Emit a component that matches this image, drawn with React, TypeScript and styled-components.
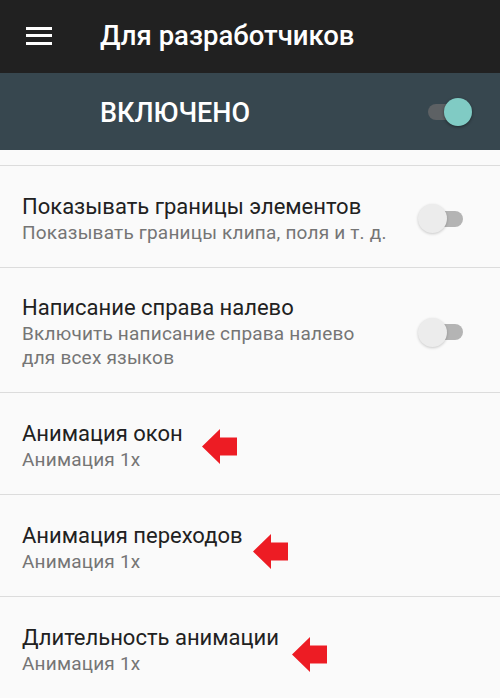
import styled, { createGlobalStyle } from "styled-components";

const GlobalStyle = createGlobalStyle`
    html, body {
        margin: 0;
        padding: 0;
        background: #fafafa;
        font-family: Roboto, "Noto Sans", "Liberation Sans", sans-serif;
    }
`;

type Item = {
    title: string;
    subtitle: string[];
    toggle?: boolean;
    arrow?: { left: number; top: number };
};

const items: Item[] = [
    { title: "Показывать границы элементов", subtitle: ["Показывать границы клипа, поля и т. д."], toggle: true },
    { title: "Написание справа налево", subtitle: ["Включить написание справа налево", "для всех языков"], toggle: true },
    { title: "Анимация окон", subtitle: ["Анимация 1x"], arrow: { left: 202, top: 36 } },
    { title: "Анимация переходов", subtitle: ["Анимация 1x"], arrow: { left: 253, top: 39 } },
    { title: "Длительность анимации", subtitle: ["Анимация 1x"], arrow: { left: 292, top: 40 } },
];

const App = () => {
    return (
        <Screen>
            <GlobalStyle />
            <AppBar>
                <MenuIcon>
                    <span />
                    <span />
                    <span />
                </MenuIcon>
                <Title>Для разработчиков</Title>
            </AppBar>

            <MasterBar>
                <MasterLabel>ВКЛЮЧЕНО</MasterLabel>
                <Switch $on />
            </MasterBar>

            <TopGap />

            <List>
                {items.map((item) => (
                    <Row key={item.title}>
                        <RowText>
                            <RowTitle>{item.title}</RowTitle>
                            {item.subtitle.map((line) => (
                                <RowSub key={line}>{line}</RowSub>
                            ))}
                        </RowText>
                        {item.toggle && <Switch />}
                        {item.arrow && (
                            <Arrow style={{ left: item.arrow.left, top: item.arrow.top }} viewBox="0 0 35 35">
                                <polygon points="0,17.5 18,0 18,8.5 35,8.5 35,26.5 18,26.5 18,35" />
                            </Arrow>
                        )}
                    </Row>
                ))}
            </List>
        </Screen>
    );
};

export default App;


const Screen = styled.div`
    width: 500px;
    height: 698px;
    overflow: hidden;
    background: #fafafa;
`;

const AppBar = styled.header`
    height: 73px;
    background: #212121;
    display: flex;
    align-items: center;
    padding-left: 26px;
    box-sizing: border-box;
`;

const MenuIcon = styled.div`
    width: 26px;
    height: 18px;
    display: flex;
    flex-direction: column;
    justify-content: space-between;
    margin-top: -2px;

    span {
        display: block;
        height: 3px;
        background: #ffffff;
    }
`;

const Title = styled.h1`
    margin: -2px 0 0 48px;
    color: #ffffff;
    font-size: 27.5px;
    font-weight: 500;
`;

const MasterBar = styled.div`
    height: 77px;
    background: #37474f;
    display: flex;
    align-items: center;
    justify-content: space-between;
    padding: 0 27px 0 100px;
    box-sizing: border-box;
`;

const MasterLabel = styled.span`
    color: #ffffff;
    font-size: 27px;
    font-weight: 500;
    margin-top: 2px;
`;

const Switch = styled.div<{ $on?: boolean }>`
    position: relative;
    flex: none;
    width: 32px;
    height: 16px;
    border-radius: 8px;
    background: ${(p) => (p.$on ? "#5d6164" : "#b4b4b4")};
    margin-right: ${(p) => (p.$on ? "13px" : "15px")};

    &::after {
        content: "";
        position: absolute;
        top: 50%;
        left: ${(p) => (p.$on ? "16px" : "-13px")};
        width: ${(p) => (p.$on ? "28px" : "29px")};
        height: ${(p) => (p.$on ? "28px" : "29px")};
        margin-top: ${(p) => (p.$on ? "-14px" : "-14.5px")};
        border-radius: 50%;
        background: ${(p) => (p.$on ? "#80cbc4" : "#ececec")};
        box-shadow: 0 1px 3px rgba(0, 0, 0, ${(p) => (p.$on ? 0.45 : 0.2)});
    }
`;

const TopGap = styled.div`
    height: 15px;
    background: #fafafa;
    border-bottom: 1px solid #dcdcdc;
`;

const List = styled.div`
    display: flex;
    flex-direction: column;
`;

const Row = styled.div`
    position: relative;
    display: flex;
    align-items: center;
    justify-content: space-between;
    padding: 26px 22px 22px 22px;
    min-height: 102px;
    box-sizing: border-box;
    border-bottom: 1px solid #dcdcdc;
`;

const RowText = styled.div`
    display: flex;
    flex-direction: column;
`;

const RowTitle = styled.div`
    font-size: 22px;
    line-height: 28px;
    color: #212121;
`;

const RowSub = styled.div`
    font-size: 19px;
    line-height: 24px;
    letter-spacing: 0.2px;
    color: #757575;
`;

const Arrow = styled.svg`
    position: absolute;
    width: 35px;
    height: 35px;
    fill: #ed1c24;
`;
